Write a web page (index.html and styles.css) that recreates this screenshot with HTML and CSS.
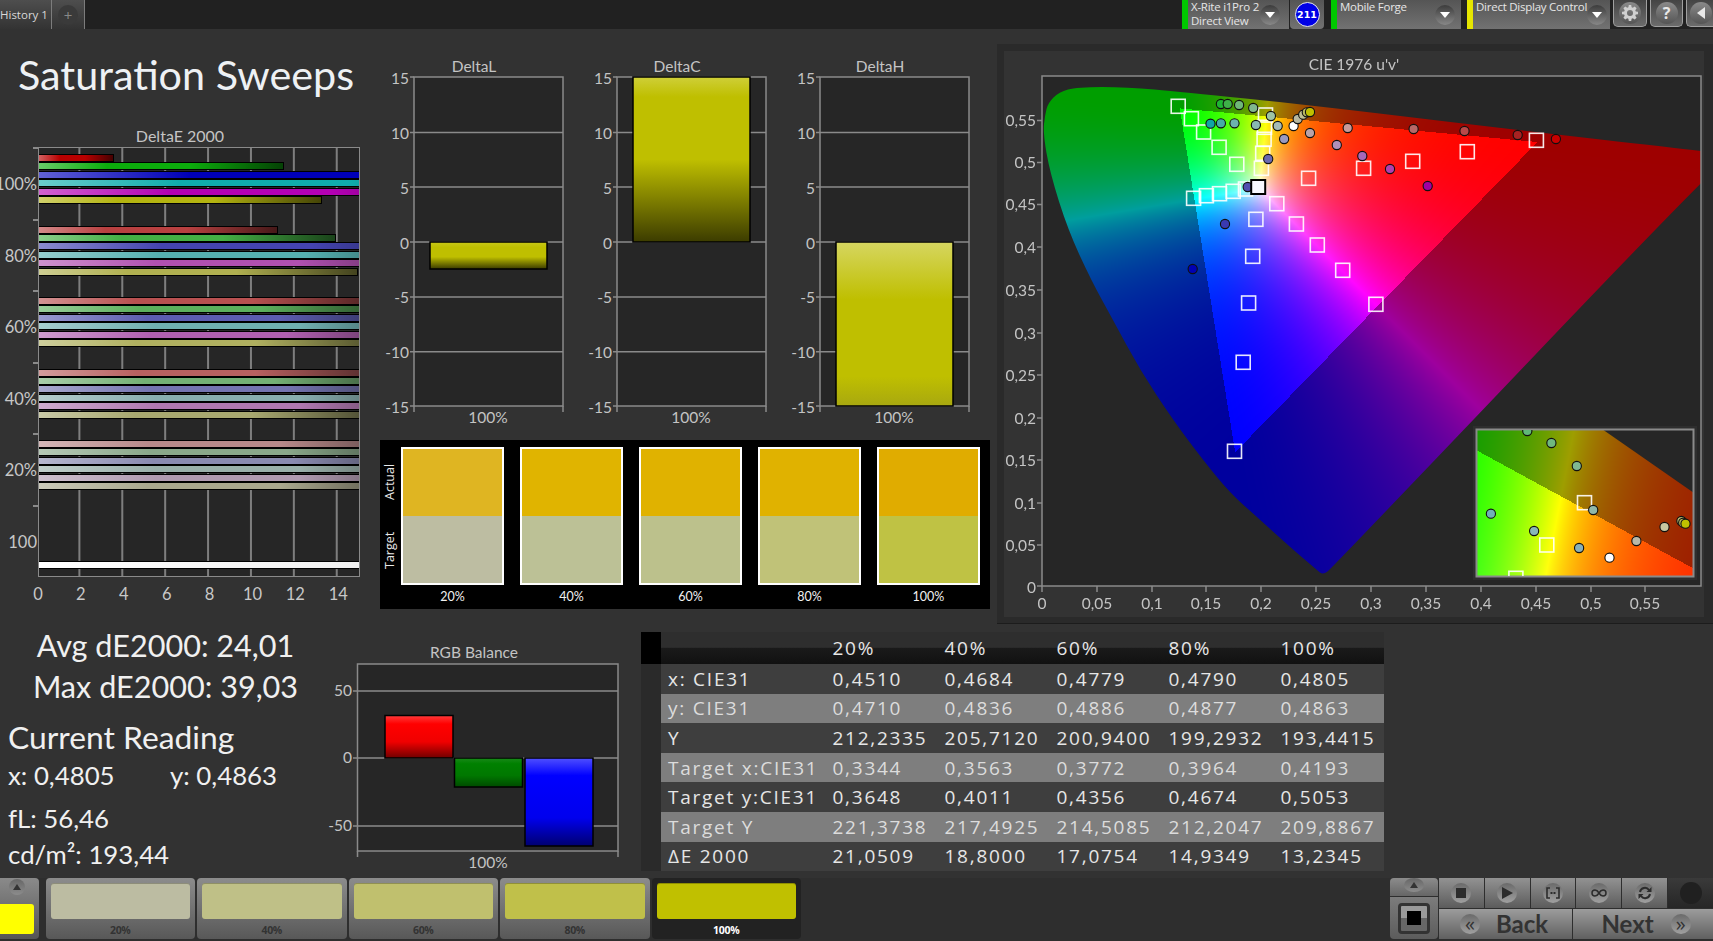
FILE: index.html
```html
<!DOCTYPE html>
<html lang="en">
<head>
<meta charset="utf-8">
<title>Saturation Sweeps</title>
<link rel="stylesheet" href="styles.css">
</head>
<body>
<div class="app">
  <header class="topbar">
    <div class="tab">History 1</div>
    <div class="tab tab-add"><span class="add-knob">+</span></div>
    <div class="top-right">
      <div class="device dev-meter green"><div class="dev-label"><span>X-Rite i1Pro 2</span><span>Direct View</span></div><span class="knob"><svg width="10" height="6" viewBox="0 0 12 7"><path d="M0 0h12L6 7z" fill="#fff"/></svg></span></div>
      <div class="badge-wrap"><span class="badge">211</span></div>
      <div class="device dev-forge green"><div class="dev-label"><span>Mobile Forge</span></div><span class="knob"><svg width="10" height="6" viewBox="0 0 12 7"><path d="M0 0h12L6 7z" fill="#fff"/></svg></span></div>
      <div class="device dev-ddc yellow"><div class="dev-label"><span>Direct Display Control</span></div><span class="knob"><svg width="10" height="6" viewBox="0 0 12 7"><path d="M0 0h12L6 7z" fill="#fff"/></svg></span></div>
      <div class="tool tool-gear"><span class="tool-knob"><svg width="16" height="16" viewBox="0 0 16 16"><path fill="#d0d0d0" fill-rule="evenodd" d="M6.8 0h2.4l.4 2.2 1.2.5L12.700 1.400l1.900 1.900-1.300 1.900.5 1.200 2.200.4v2.400l-2.200.4-.5 1.200 1.300 1.900-1.900 1.900-1.900-1.300-1.200.5-.4 2.200H6.800l-.4-2.200-1.200-.5-1.900 1.300-1.900-1.900 1.300-1.900-.5-1.200L0 9.200V6.800l2.200-.4.500-1.200-1.300-1.900 1.900-1.900 1.900 1.300 1.200-.5zM8 5a3 3 0 1 0 0 6 3 3 0 0 0 0-6z"/></svg></span></div>
      <div class="tool tool-help"><span class="tool-knob help-mark">?</span></div>
      <div class="tool tool-back"><span class="tool-knob"><svg width="8" height="12" viewBox="0 0 8 12"><path d="M8 0v12L0 6z" fill="#e8e8e8"/></svg></span></div>
    </div>
  </header>

  <main class="content">
    <div class="upper">
      <section class="col-sweep">
        <h1 class="page-title">Saturation Sweeps</h1>
        <div class="chart-de">
          <div class="chart-title de-title">DeltaE 2000</div>
          <div class="de-body">
            <div class="de-ylabels">
              <span>100%</span><span>80%</span><span>60%</span><span>40%</span><span>20%</span><span>100</span>
            </div>
            <div class="de-plot">
              <div class="de-group">
                <div class="bar r100" style="width:75px"></div><div class="bar g100" style="width:245px"></div><div class="bar b100" style="width:540px"></div><div class="bar c100" style="width:500px"></div><div class="bar m100" style="width:470px"></div><div class="bar y100" style="width:283px"></div>
              </div>
              <div class="de-group">
                <div class="bar r80" style="width:239px"></div><div class="bar g80" style="width:297px"></div><div class="bar b80" style="width:440px"></div><div class="bar c80" style="width:430px"></div><div class="bar m80" style="width:420px"></div><div class="bar y80" style="width:319px"></div>
              </div>
              <div class="de-group">
                <div class="bar r60" style="width:345px"></div><div class="bar g60" style="width:360px"></div><div class="bar b60" style="width:390px"></div><div class="bar c60" style="width:420px"></div><div class="bar m60" style="width:400px"></div><div class="bar y60" style="width:350px"></div>
              </div>
              <div class="de-group">
                <div class="bar r40" style="width:350px"></div><div class="bar g40" style="width:380px"></div><div class="bar b40" style="width:400px"></div><div class="bar c40" style="width:420px"></div><div class="bar m40" style="width:420px"></div><div class="bar y40" style="width:345px"></div>
              </div>
              <div class="de-group">
                <div class="bar r20" style="width:390px"></div><div class="bar g20" style="width:400px"></div><div class="bar b20" style="width:410px"></div><div class="bar c20" style="width:420px"></div><div class="bar m20" style="width:420px"></div><div class="bar y20" style="width:390px"></div>
              </div>
              <div class="de-group de-white">
                <div class="bar w100" style="width:321px"></div>
              </div>
            </div>
          </div>
          <div class="de-xlabels"><span>0</span><span>2</span><span>4</span><span>6</span><span>8</span><span>10</span><span>12</span><span>14</span></div>
        </div>
      </section>

      <section class="col-delta">
        <div class="delta-row">
          <svg class="delta-svg" viewBox="0 0 203 372" width="203" height="372">
            <defs>
              <linearGradient id="gradL" x1="0" y1="0" x2="0" y2="1"><stop offset="0" stop-color="#c8c818"/><stop offset=".2" stop-color="#bfbf00"/><stop offset=".55" stop-color="#bfbf00"/><stop offset="1" stop-color="#3a3a00"/></linearGradient>
              <linearGradient id="gradC" x1="0" y1="0" x2="0" y2="1"><stop offset="0" stop-color="#cfcf38"/><stop offset=".12" stop-color="#bfbf00"/><stop offset=".5" stop-color="#bfbf00"/><stop offset="1" stop-color="#3c3c00"/></linearGradient>
              <linearGradient id="gradH" x1="0" y1="0" x2="0" y2="1"><stop offset="0" stop-color="#d6d660"/><stop offset=".35" stop-color="#bfbf00"/><stop offset=".82" stop-color="#bfbf00"/><stop offset="1" stop-color="#a8a810"/></linearGradient>
            </defs>
            <text class="ct" x="94" y="14">DeltaL</text>
            <rect class="plot" x="34" y="19" width="149" height="329"/>
            <path class="grid" d="M34 74.500H183M34 129H183M34 184H183M34 239H183M34 293.800H183M30 19h4M30 74.500h4M30 129h4M30 184h4M30 239h4M30 293.800h4M30 348h4M34 348v6M183 348v6"/>
            <text class="yt" x="29" y="25.500">15</text><text class="yt" x="29" y="80.500">10</text><text class="yt" x="29" y="135.500">5</text><text class="yt" x="29" y="190.500">0</text><text class="yt" x="29" y="244.500">-5</text><text class="yt" x="29" y="299.500">-10</text><text class="yt" x="29" y="354.500">-15</text>
            <rect class="dbar" x="50" y="184" width="117" height="27" fill="url(#gradL)"/>
            <text class="ct" x="108" y="365">100%</text>
          </svg>
          <svg class="delta-svg" viewBox="0 0 203 372" width="203" height="372">
            <text class="ct" x="94" y="14">DeltaC</text>
            <rect class="plot" x="34" y="19" width="149" height="329"/>
            <path class="grid" d="M34 74.500H183M34 129H183M34 184H183M34 239H183M34 293.800H183M30 19h4M30 74.500h4M30 129h4M30 184h4M30 239h4M30 293.800h4M30 348h4M34 348v6M183 348v6"/>
            <text class="yt" x="29" y="25.500">15</text><text class="yt" x="29" y="80.500">10</text><text class="yt" x="29" y="135.500">5</text><text class="yt" x="29" y="190.500">0</text><text class="yt" x="29" y="244.500">-5</text><text class="yt" x="29" y="299.500">-10</text><text class="yt" x="29" y="354.500">-15</text>
            <rect class="dbar" x="50" y="19" width="117" height="165" fill="url(#gradC)"/>
            <text class="ct" x="108" y="365">100%</text>
          </svg>
          <svg class="delta-svg" viewBox="0 0 203 372" width="203" height="372">
            <text class="ct" x="94" y="14">DeltaH</text>
            <rect class="plot" x="34" y="19" width="149" height="329"/>
            <path class="grid" d="M34 74.500H183M34 129H183M34 184H183M34 239H183M34 293.800H183M30 19h4M30 74.500h4M30 129h4M30 184h4M30 239h4M30 293.800h4M30 348h4M34 348v6M183 348v6"/>
            <text class="yt" x="29" y="25.500">15</text><text class="yt" x="29" y="80.500">10</text><text class="yt" x="29" y="135.500">5</text><text class="yt" x="29" y="190.500">0</text><text class="yt" x="29" y="244.500">-5</text><text class="yt" x="29" y="299.500">-10</text><text class="yt" x="29" y="354.500">-15</text>
            <rect class="dbar" x="50" y="184" width="117" height="164" fill="url(#gradH)"/>
            <text class="ct" x="108" y="365">100%</text>
          </svg>
        </div>
        <div class="swatch-panel">
          <div class="swatch-axis"><span>Actual</span><span>Target</span></div>
          <div class="swatch-col"><div class="swatch"><i class="a20"></i><i class="t20"></i></div><span>20%</span></div>
          <div class="swatch-col"><div class="swatch"><i class="a40"></i><i class="t40"></i></div><span>40%</span></div>
          <div class="swatch-col"><div class="swatch"><i class="a60"></i><i class="t60"></i></div><span>60%</span></div>
          <div class="swatch-col"><div class="swatch"><i class="a80"></i><i class="t80"></i></div><span>80%</span></div>
          <div class="swatch-col"><div class="swatch"><i class="a100"></i><i class="t100"></i></div><span>100%</span></div>
        </div>
      </section>

      <section class="col-cie">
        <div class="cie-panel">
          <canvas id="cie" class="cie-canvas" width="659" height="510"></canvas>
          <svg class="cie-svg" viewBox="1004 51 700 566" width="700" height="566">
            <defs>
              <rect id="sq" x="-7" y="-7" width="14" height="14" class="square"/>
            </defs>
            <text class="ct" x="1354" y="70">CIE 1976 u'v'</text>
            <rect class="frame" x="1042" y="76" width="659" height="510"/>
            <path class="grid" d="M1037 120.500h5M1037 162.500h5M1037 204.500h5M1037 247h5M1037 290h5M1037 333h5M1037 375h5M1037 418h5M1037 460h5M1037 503h5M1037 545h5M1037 586h5M1042 586v6M1097 586v6M1152 586v6M1206 586v6M1261 586v6M1316 586v6M1371 586v6M1426 586v6M1481 586v6M1536 586v6M1591 586v6M1645 586v6"/>
            <text class="yt" x="1036" y="125.500">0,55</text><text class="yt" x="1036" y="167.500">0,5</text><text class="yt" x="1036" y="209.500">0,45</text><text class="yt" x="1036" y="252.500">0,4</text><text class="yt" x="1036" y="295.500">0,35</text><text class="yt" x="1036" y="338.500">0,3</text><text class="yt" x="1036" y="380.500">0,25</text><text class="yt" x="1036" y="423.500">0,2</text><text class="yt" x="1036" y="465.500">0,15</text><text class="yt" x="1036" y="508.500">0,1</text><text class="yt" x="1036" y="550.500">0,05</text><text class="yt" x="1036" y="592.500">0</text>
            <text class="ct" x="1042" y="609">0</text><text class="ct" x="1097" y="609">0,05</text><text class="ct" x="1152" y="609">0,1</text><text class="ct" x="1206" y="609">0,15</text><text class="ct" x="1261" y="609">0,2</text><text class="ct" x="1316" y="609">0,25</text><text class="ct" x="1371" y="609">0,3</text><text class="ct" x="1426" y="609">0,35</text><text class="ct" x="1481" y="609">0,4</text><text class="ct" x="1536" y="609">0,45</text><text class="ct" x="1591" y="609">0,5</text><text class="ct" x="1645" y="609">0,55</text>

            <use href="#sq" x="1178.200" y="106.300"/><use href="#sq" x="1191.400" y="118.700"/><use href="#sq" x="1203.600" y="132"/><use href="#sq" x="1219.100" y="147.300"/><use href="#sq" x="1236.800" y="164.300"/><use href="#sq" x="1193.600" y="198.300"/><use href="#sq" x="1206.400" y="195.700"/><use href="#sq" x="1219.500" y="193.700"/><use href="#sq" x="1233.200" y="191.300"/><use href="#sq" x="1245.500" y="189"/><use href="#sq" x="1276.800" y="203.700"/><use href="#sq" x="1296.400" y="224"/><use href="#sq" x="1317.300" y="245"/><use href="#sq" x="1342.700" y="270.300"/><use href="#sq" x="1375.900" y="304.300"/><use href="#sq" x="1261.400" y="168.300"/><use href="#sq" x="1262.700" y="153.300"/><use href="#sq" x="1264.100" y="139.300"/><use href="#sq" x="1264.500" y="127.300"/><use href="#sq" x="1265.500" y="115"/><use href="#sq" x="1308.600" y="178.300"/><use href="#sq" x="1363.600" y="168.300"/><use href="#sq" x="1412.700" y="161.300"/><use href="#sq" x="1467.300" y="151.700"/><use href="#sq" x="1536.400" y="140.300"/><use href="#sq" x="1255.900" y="219.300"/><use href="#sq" x="1252.700" y="256.300"/><use href="#sq" x="1248.600" y="303"/><use href="#sq" x="1243.200" y="362.300"/><use href="#sq" x="1234.500" y="451.300"/>

            <g class="dots">
              <circle cx="1220.900" cy="104" r="4.600" fill="#1fb532"/><circle cx="1227.700" cy="104" r="4.600" fill="#3eb048"/><circle cx="1239.100" cy="105" r="4.600" fill="#6fb878"/><circle cx="1253.200" cy="108" r="4.600" fill="#80b88c"/><circle cx="1270.900" cy="116" r="4.600" fill="#9ec4a4"/>
              <circle cx="1210.500" cy="123.700" r="4.600" fill="#10a5a5"/><circle cx="1220.900" cy="123.300" r="4.600" fill="#45aca8"/><circle cx="1234.500" cy="123.300" r="4.600" fill="#6cb3ae"/><circle cx="1255.900" cy="125" r="4.600" fill="#88b8b4"/><circle cx="1277.700" cy="126" r="4.600" fill="#a5bcb6"/><circle cx="1293.600" cy="126" r="4.600" fill="#ffffff"/>
              <circle cx="1310" cy="133" r="4.600" fill="#b9a3a8"/><circle cx="1347.700" cy="128" r="4.600" fill="#c89a9a"/><circle cx="1413.600" cy="129" r="4.600" fill="#b86868"/><circle cx="1464.500" cy="131" r="4.600" fill="#b84848"/><circle cx="1517.700" cy="135" r="4.600" fill="#a82222"/><circle cx="1555.900" cy="139" r="4.600" fill="#c80000"/>
              <circle cx="1336.800" cy="145" r="4.600" fill="#b090b8"/><circle cx="1362.300" cy="156" r="4.600" fill="#a868b8"/><circle cx="1390" cy="169" r="4.600" fill="#b040b0"/><circle cx="1427.700" cy="186" r="4.600" fill="#a000a0"/>
              <circle cx="1284.100" cy="139" r="4.600" fill="#9a9ac0"/><circle cx="1268.200" cy="159" r="4.600" fill="#6a6ab0"/><circle cx="1247.700" cy="187" r="4.600" fill="#5050b0"/><circle cx="1225" cy="224" r="4.600" fill="#3a3ab0"/><circle cx="1192.700" cy="269" r="4.600" fill="#0000b4"/>
              <circle cx="1297.700" cy="119" r="4.600" fill="#b8b8a0"/><circle cx="1303.200" cy="114.700" r="4.600" fill="#c0c090"/><circle cx="1306.800" cy="112.300" r="4.600" fill="#b8b860"/><circle cx="1310" cy="112" r="4.600" fill="#c0c000"/>
            </g>
            <rect class="square square-white" x="1251.200" y="180" width="14" height="14"/>

            <rect class="inset-mat" x="1474.500" y="427.500" width="221" height="151"/>
            <rect class="inset-frame" x="1476.500" y="429.500" width="217" height="147"/>
            <svg x="1477" y="430" width="216" height="146" viewBox="1477 430 216 146">
              <use href="#sq" x="1584.500" y="502.700"/><use href="#sq" x="1546.800" y="545"/><use href="#sq" x="1515.900" y="578.300"/>
              <g class="dots">
                <circle cx="1527.300" cy="431" r="4.600" fill="#60b878"/><circle cx="1551.400" cy="443" r="4.600" fill="#70b880"/><circle cx="1576.800" cy="466" r="4.600" fill="#80b890"/><circle cx="1593.200" cy="510" r="4.600" fill="#90b8a8"/><circle cx="1490.900" cy="513.700" r="4.600" fill="#70b0b8"/><circle cx="1534.100" cy="531" r="4.600" fill="#88b8b8"/><circle cx="1579.100" cy="548" r="4.600" fill="#88b0b8"/><circle cx="1609.500" cy="557.700" r="4.600" fill="#ffffff"/><circle cx="1636.400" cy="541" r="4.600" fill="#b8b8a8"/><circle cx="1664.500" cy="527" r="4.600" fill="#c8c8a0"/><circle cx="1681.400" cy="521" r="4.600" fill="#b8b870"/><circle cx="1683.200" cy="522.700" r="4.600" fill="#b8b860"/><circle cx="1685.500" cy="523.700" r="4.600" fill="#c0c000"/>
              </g>
            </svg>
          </svg>
        </div>
      </section>
    </div>

    <div class="lower">
      <section class="stats">
        <div class="stat-big">Avg dE2000: 24,01</div>
        <div class="stat-big">Max dE2000: 39,03</div>
        <div class="stat-head">Current Reading</div>
        <div class="stat-line stat-xy"><span class="stat-x">x: 0,4805</span><span>y: 0,4863</span></div>
        <div class="stat-line stat-fl">fL: 56,46</div>
        <div class="stat-line">cd/m²: 193,44</div>
      </section>

      <svg class="rgb-svg" viewBox="325 640 316 230" width="316" height="230">
        <defs>
          <linearGradient id="gradR" x1="0" y1="0" x2="0" y2="1"><stop offset="0" stop-color="#ff3c3c"/><stop offset=".2" stop-color="#ff0000"/><stop offset=".62" stop-color="#f00000"/><stop offset="1" stop-color="#700000"/></linearGradient>
          <linearGradient id="gradG" x1="0" y1="0" x2="0" y2="1"><stop offset="0" stop-color="#1a8a1a"/><stop offset=".2" stop-color="#008000"/><stop offset=".6" stop-color="#007800"/><stop offset="1" stop-color="#004a00"/></linearGradient>
          <linearGradient id="gradB" x1="0" y1="0" x2="0" y2="1"><stop offset="0" stop-color="#5050ff"/><stop offset=".2" stop-color="#0000ff"/><stop offset=".68" stop-color="#0000ee"/><stop offset="1" stop-color="#000070"/></linearGradient>
        </defs>
        <text class="ct" x="474" y="658">RGB Balance</text>
        <rect class="plot" x="357.500" y="664" width="260.500" height="187"/>
        <path class="grid" d="M357.500 691H618M357.500 758H618M357.500 826H618M353 691h4.500M353 758h4.500M353 826h4.500M357.500 851v6M618 851v6"/>
        <text class="yt" x="352" y="696">50</text><text class="yt" x="352" y="763">0</text><text class="yt" x="352" y="831">-50</text>
        <rect class="dbar" x="385" y="715.500" width="68" height="42.500" fill="url(#gradR)"/>
        <rect class="dbar" x="454.500" y="758" width="68" height="29" fill="url(#gradG)"/>
        <rect class="dbar" x="525" y="758" width="68" height="88" fill="url(#gradB)"/>
        <text class="ct" x="488" y="868">100%</text>
      </svg>

      <table class="data">
        <colgroup><col class="c-side"><col class="c-label"><col class="c-num"><col class="c-num"><col class="c-num"><col class="c-num"><col class="c-last"></colgroup>
        <thead>
          <tr><th class="side-head"></th><th></th><th>20%</th><th>40%</th><th>60%</th><th>80%</th><th>100%</th></tr>
        </thead>
        <tbody>
          <tr><td class="side"></td><td class="lbl">x: CIE31</td><td>0,4510</td><td>0,4684</td><td>0,4779</td><td>0,4790</td><td>0,4805</td></tr>
          <tr class="alt"><td class="side"></td><td class="lbl">y: CIE31</td><td>0,4710</td><td>0,4836</td><td>0,4886</td><td>0,4877</td><td>0,4863</td></tr>
          <tr><td class="side"></td><td class="lbl">Y</td><td>212,2335</td><td>205,7120</td><td>200,9400</td><td>199,2932</td><td>193,4415</td></tr>
          <tr class="alt"><td class="side"></td><td class="lbl">Target x:CIE31</td><td>0,3344</td><td>0,3563</td><td>0,3772</td><td>0,3964</td><td>0,4193</td></tr>
          <tr><td class="side"></td><td class="lbl">Target y:CIE31</td><td>0,3648</td><td>0,4011</td><td>0,4356</td><td>0,4674</td><td>0,5053</td></tr>
          <tr class="alt"><td class="side"></td><td class="lbl">Target Y</td><td>221,3738</td><td>217,4925</td><td>214,5085</td><td>212,2047</td><td>209,8867</td></tr>
          <tr><td class="side"></td><td class="lbl">ΔE 2000</td><td>21,0509</td><td>18,8000</td><td>17,0754</td><td>14,9349</td><td>13,2345</td></tr>
        </tbody>
      </table>
    </div>
  </main>

  <footer class="bottombar">
    <div class="handle">
      <span class="mini-knob"><svg width="8" height="6" viewBox="0 0 8 6"><path d="M4 0l4 6H0z" fill="#333"/></svg></span>
      <span class="current-color"></span>
    </div>
    <div class="tiles">
      <div class="tile"><span class="tile-color s20"></span><span class="tile-label">20%</span></div>
      <div class="tile"><span class="tile-color s40"></span><span class="tile-label">40%</span></div>
      <div class="tile"><span class="tile-color s60"></span><span class="tile-label">60%</span></div>
      <div class="tile"><span class="tile-color s80"></span><span class="tile-label">80%</span></div>
      <div class="tile tile-active"><span class="tile-color s100"></span><span class="tile-label">100%</span></div>
    </div>
    <div class="controls">
      <div class="ctl-side">
        <div class="ctl-up"><span class="mini-knob"><svg width="8" height="6" viewBox="0 0 8 6"><path d="M4 0l4 6H0z" fill="#333"/></svg></span></div>
        <div class="ctl-stop"><span class="stop-frame"><span class="stop-square"></span></span></div>
      </div>
      <div class="ctl-main">
        <div class="ctl-row">
          <div class="ctl-btn"><span class="ctl-knob"><svg width="10" height="10" viewBox="0 0 10 10"><rect width="10" height="10" fill="#2c2c2c"/></svg></span></div>
          <div class="ctl-btn"><span class="ctl-knob"><svg width="12" height="12" viewBox="0 0 12 12"><path d="M1 0l11 6-11 6z" fill="#2c2c2c"/></svg></span></div>
          <div class="ctl-btn"><span class="ctl-knob"><svg width="14" height="12" viewBox="0 0 14 12"><path d="M4 1H1v10h3M10 1h3v10h-3" fill="none" stroke="#2c2c2c" stroke-width="1.600"/><rect x="4.500" y="5" width="2" height="2" fill="#2c2c2c"/><rect x="7.500" y="5" width="2" height="2" fill="#2c2c2c"/></svg></span></div>
          <div class="ctl-btn"><span class="ctl-knob"><svg width="16" height="8" viewBox="0 0 16 8"><path d="M8 4C6.500 1.500 5.500 1 4 1a3 3 0 0 0 0 6c1.500 0 2.500-.5 4-3s2.500-3 4-3a3 3 0 0 1 0 6c-1.500 0-2.500-.5-4-3z" fill="none" stroke="#2c2c2c" stroke-width="1.500"/></svg></span></div>
          <div class="ctl-btn"><span class="ctl-knob"><svg width="14" height="14" viewBox="0 0 14 14"><path d="M2 6a5 5 0 0 1 9-2" fill="none" stroke="#2c2c2c" stroke-width="2"/><path d="M12 8a5 5 0 0 1-9 2" fill="none" stroke="#2c2c2c" stroke-width="2"/><path d="M13.500 1v5h-5zM.500 13V8h5z" fill="#2c2c2c"/></svg></span></div>
          <div class="ctl-btn ctl-dark"><span class="dark-knob"></span></div>
        </div>
        <div class="ctl-row">
          <div class="nav-btn"><span class="ctl-knob nav-glyph">«</span><span class="nav-text">Back</span></div>
          <div class="nav-btn nav-next"><span class="nav-text">Next</span><span class="ctl-knob nav-glyph">»</span></div>
        </div>
      </div>
    </div>
  </footer>
</div>
<script src="script.js"></script>
</body>
</html>
```
FILE: styles.css
```css
* { box-sizing: border-box; }
html, body { margin: 0; padding: 0; background: #323232; }
body { font-family: Lato, "Open Sans", sans-serif; color: #c8c8c8; }
.app { width: 1713px; height: 941px; display: flex; flex-direction: column; overflow: hidden; background: #323232; }

/* top bar */
.topbar { height: 29px; flex: none; display: flex; background: #212121; }
.tab { width: 52px; height: 29px; background: linear-gradient(#4e4e4e, #333); border-right: 1px solid #7c7c7c; font: 11.500px/30px "Open Sans", sans-serif; color: #d8d8d8; white-space: nowrap; overflow: hidden; }
.tab-add { width: 33px; display: flex; align-items: center; justify-content: center; }
.add-knob { width: 20px; height: 20px; border-radius: 50%; background: #3a3a3a; color: #888; font: 15px/20px "Open Sans", sans-serif; text-align: center; }
.top-right { margin-left: auto; display: flex; }
.device { height: 29px; display: flex; align-items: center; padding-left: 3px; padding-right: 6px; background: linear-gradient(#555, #727272); border-left: 6px solid #00c800; color: #e6e6e6; }
.device.yellow { border-left-color: #e6e600; }
.dev-meter { width: 107px; margin-right: 1px; padding-right: 9px; }
.dev-forge { width: 130px; margin-left: 7px; }
.dev-ddc { width: 143px; margin-left: 6px; margin-right: 3px; }
.dev-label { display: flex; flex-direction: column; font: 11.500px/14px "Open Sans", sans-serif; align-self: flex-start; white-space: nowrap; letter-spacing: -.25px; }
.knob { margin-left: auto; width: 20px; height: 20px; border-radius: 50%; background: linear-gradient(#3c3c3c, #888); display: flex; align-items: center; justify-content: center; flex: none; }
.badge-wrap { width: 34px; height: 29px; background: linear-gradient(#555, #727272); border-radius: 0 0 4px 4px; display: flex; align-items: center; justify-content: center; }
.badge { width: 25px; height: 25px; border-radius: 50%; background: #0000e6; border: 1px solid #e8e8e8; color: #fff; font: 700 9.500px/23px "DejaVu Sans", sans-serif; text-align: center; }
.tool { height: 27px; border: 1px solid #a0a0a0; border-top: 0; border-radius: 0 0 5px 5px; background: linear-gradient(#444, #6c6c6c); display: flex; align-items: center; justify-content: center; margin-right: 3px; }
.tool-gear { width: 34px; }
.tool-help { width: 33px; }
.tool-back { width: 27px; margin-right: 0; justify-content: flex-start; padding-left: 3px; border-radius: 0 0 0 5px; border-right: 0; }
.tool-knob { width: 22px; height: 22px; border-radius: 50%; background: linear-gradient(#8a8a8a, #555); display: flex; align-items: center; justify-content: center; flex: none; }
.help-mark { color: #e8e8e8; font: 700 16px "Open Sans", sans-serif; }

/* layout */
.content { flex: 1; display: flex; flex-direction: column; min-height: 0; }
.upper { height: 595px; flex: none; display: flex; }
.lower { flex: 1; display: flex; align-items: flex-start; }
.col-sweep { width: 370px; flex: none; }
.col-delta { width: 627px; flex: none; padding: 29px 0 0 10px; }
.col-cie { width: 716px; flex: none; margin-top: 15px; height: 580px; padding: 7px 9px 6px 7px; background: #2a2a2a; border-bottom: 1px solid #1c1c1c; }

/* title and DeltaE */
.page-title { margin: 0; padding: 22px 0 0 18px; height: 96px; font: 400 41.300px/46px Lato, sans-serif; color: #eef1f4; white-space: nowrap; }
.chart-de { width: 370px; }
.chart-title { color: #c4c4c4; font-size: 16px; line-height: 22px; text-align: center; }
.de-title { width: 360px; height: 22px; }
.de-body { display: flex; }
.de-ylabels { width: 38px; flex: none; display: flex; flex-direction: column; }
.de-ylabels span { height: 71.500px; display: flex; align-items: center; justify-content: flex-end; padding: 3px 1px 0 0; font-size: 16.500px; color: #c8c8c8; background: linear-gradient(#8a8a8a, #8a8a8a) right top / 5px 2px no-repeat; }
.de-plot { width: 322px; height: 430px; flex: none; overflow: hidden; border: 1.500px solid #8a8a8a; background-color: #262626; background-image: linear-gradient(90deg, transparent 41px, #7e7e7e 41px, #7e7e7e 43px); background-size: 42.900px 100%; background-position: -1.500px 0; }
.de-group { height: 71.500px; padding-top: 6px; }
.de-white { padding-top: 55.500px; }
.bar { height: 8px; margin-bottom: .450px; border: 1px solid #000; border-left: 0; --shade: linear-gradient(90deg, rgba(255,255,255,.38), rgba(255,255,255,0) 28%, rgba(0,0,0,0) 62%, rgba(0,0,0,.62)); background: var(--shade), var(--c); }
.r100 { --c: #b80000; } .g100 { --c: #0cac0c; } .b100 { --c: #0000b8; } .c100 { --c: #10acac; } .m100 { --c: #b400b4; } .y100 { --c: #b4b410; }
.r80 { --c: #b84040; } .g80 { --c: #44b044; } .b80 { --c: #4444b0; } .c80 { --c: #55b0b0; } .m80 { --c: #b050b0; } .y80 { --c: #b0b050; }
.r60 { --c: #b85050; } .g60 { --c: #5cb05c; } .b60 { --c: #5c5cb0; } .c60 { --c: #70b0b0; } .m60 { --c: #b060b0; } .y60 { --c: #b0b060; }
.r40 { --c: #b86060; } .g40 { --c: #74b074; } .b40 { --c: #7474b0; } .c40 { --c: #88aeae; } .m40 { --c: #b078b0; } .y40 { --c: #a8a870; }
.r20 { --c: #b88a8a; } .g20 { --c: #8aa88a; } .b20 { --c: #8a8ab0; } .c20 { --c: #9ab0aa; } .m20 { --c: #b09ab0; } .y20 { --c: #aaa88e; }
.w100 { background: linear-gradient(90deg, #fff, #f0f0f0); }
.de-xlabels { display: flex; padding-left: 38px; padding-top: 7px; font-size: 16.500px; color: #c8c8c8; }
.de-xlabels span { width: 42.900px; flex: none; margin-left: 0; transform: translateX(-21.450px); text-align: center; }

/* svg charts */
.ct { font: 15.500px Lato, sans-serif; fill: #c4c4c4; text-anchor: middle; }
.yt { font: 15.500px Lato, sans-serif; fill: #c4c4c4; text-anchor: end; }
.plot { fill: #262626; stroke: #8a8a8a; stroke-width: 1.500; }
.grid { stroke: #8a8a8a; stroke-width: 1.500; fill: none; }
.frame { fill: none; stroke: #8a8a8a; stroke-width: 1.500; }
.dbar { stroke: #000; stroke-width: 1.500; }
.delta-row { display: flex; height: 372px; }
.delta-svg { display: block; flex: none; }

/* swatches */
.swatch-panel { width: 610px; height: 169px; margin-top: 10px; background: #000; display: flex; gap: 16px; padding-top: 7px; position: relative; }
.swatch-axis { width: 5px; margin-right: 0; flex: none; height: 138px; display: flex; flex-direction: column; }
.swatch-axis span { display: block; width: 20px; height: 69px; writing-mode: vertical-rl; transform: rotate(180deg); font: 12.500px/20px "Open Sans", sans-serif; color: #e8e8e8; text-align: center; }
.swatch-col { width: 103px; flex: none; font: 12.500px/24px Lato, sans-serif; color: #f0f0f0; text-align: center; }
.swatch { height: 138px; border: 2px solid #fff; display: flex; flex-direction: column; }
.swatch i { display: block; flex: 1; }
.swatch-col span { display: block; }
.a20 { background: #dfb522; } .a40 { background: #e0b400; } .a60 { background: #e0b200; } .a80 { background: #e0b200; } .a100 { background: #e0ac00; }
.t20 { background: #bdbda2; } .t40 { background: #bcc196; } .t60 { background: #bcc18c; } .t80 { background: #c0c278; } .t100 { background: #bfc244; }

/* CIE */
.cie-panel { width: 700px; height: 566px; background: #333; position: relative; }
.cie-canvas { position: absolute; left: 38px; top: 25px; width: 659px; height: 510px; display: block; }
.cie-svg { position: absolute; left: 0; top: 0; display: block; }
.square { fill: none; stroke: #fff; stroke-opacity: .9; stroke-width: 1.600; }
.square-white { fill: #f8f8ff; stroke: #000; stroke-opacity: 1; stroke-width: 2; }
.dots circle { stroke: #101010; stroke-width: 1.100; }
.inset-mat { fill: none; stroke: #2e2e2e; stroke-width: 3; }
.inset-frame { fill: none; stroke: #8a8a8a; stroke-width: 2; }

/* stats */
.stats { width: 325px; flex: none; color: #f0f0f0; padding-top: 1px; }
.stat-big { font-size: 30.600px; line-height: 41px; text-align: center; width: 331px; white-space: nowrap; }
.stat-head { font-size: 31.800px; line-height: 42px; padding-left: 8px; margin-top: 9px; margin-bottom: -1px; white-space: nowrap; }
.stat-line { font-size: 25.800px; line-height: 36px; padding-left: 8px; white-space: nowrap; }
.stat-xy { display: flex; }
.stat-x { width: 162px; }
.stat-fl { margin-top: 7px; }
.rgb-svg { display: block; flex: none; margin-top: 16px; }

/* table */
.data { margin-top: 8px; width: 743px; border-collapse: collapse; table-layout: fixed; font: 19px "Open Sans", sans-serif; letter-spacing: 1.750px; color: #e6e6e6; flex: none; }
.c-side { width: 20px; } .c-label { width: 171.500px; } .c-num { width: 112px; } .c-last { width: 103.500px; }
.data th { height: 32px; padding: 0; font-weight: 400; text-align: left; background: linear-gradient(#2e2e2e 0, #2e2e2e 48%, #1a1a1a 50%, #111 100%); }
.data th.side-head { background: #000; }
.data td { height: 29.600px; padding: 0; background: #3e3e3e; white-space: nowrap; }
.data tr.alt td { background: #7e7e7e; color: #dcdcdc; }
.data td.lbl { padding-left: 7px; }
.data td.side, .data tr.alt td.side { background: #2a2a2a; }

/* bottom bar */
.bottombar { height: 63px; flex: none; display: flex; background: #2e2e2e; padding-bottom: 2px; }
.handle { width: 39px; flex: none; background: linear-gradient(#8a8a8a, #555); border-radius: 0 4px 4px 0; display: flex; flex-direction: column; }
.mini-knob { width: 16px; height: 16px; border-radius: 50%; background: linear-gradient(#666, #8c8c8c); display: flex; align-items: center; justify-content: center; }
.handle .mini-knob { margin: 1px 0 0 9px; }
.current-color { width: 34px; height: 30px; margin-top: 9px; background: #ffff00; border-radius: 0 3px 3px 0; }
.tiles { margin-left: 6.500px; display: flex; gap: 2px; }
.tile { width: 149.500px; flex: none; background: linear-gradient(#8c8c8c, #585858); border-radius: 4px; padding: 5px 5px 0; display: flex; flex-direction: column; align-items: center; }
.tile-color { width: 100%; height: 36px; border-radius: 3px; flex: none; box-shadow: inset 0 1px 0 rgba(0,0,0,.25); }
.tile-label { font: 700 10.500px/22px "Open Sans", sans-serif; color: #333; letter-spacing: -.3px; }
.tile-active { background: #222; }
.tile-active .tile-label { color: #fff; }
.s20 { background: #bcbca2; } .s40 { background: #bfc087; } .s60 { background: #c0c06e; } .s80 { background: #c0c04a; } .s100 { background: #c0c000; }
.controls { margin-left: auto; width: 323px; display: flex; flex: none; gap: 1px; }
.ctl-side { width: 48px; flex: none; display: flex; flex-direction: column; gap: 1px; }
.ctl-up { height: 18px; background: linear-gradient(#8c8c8c, #666); border-radius: 4px 4px 0 0; display: flex; justify-content: center; }
.ctl-up .mini-knob { height: 14px; width: 20px; }
.ctl-stop { flex: 1; background: linear-gradient(#7c7c7c, #5c5c5c); border-radius: 0 0 4px 4px; display: flex; align-items: center; justify-content: center; }
.stop-frame { width: 32px; height: 31px; border: 3px solid #333; border-radius: 4px; background: linear-gradient(#9a9a9a 50%, #666 50%); display: flex; align-items: center; justify-content: center; }
.stop-square { width: 14px; height: 14px; background: #000; }
.ctl-main { flex: 1; display: flex; flex-direction: column; gap: 1px; }
.ctl-row { flex: 1; display: flex; gap: 1px; }
.ctl-btn { width: 44px; flex: 1; background: linear-gradient(#929292, #5c5c5c); display: flex; align-items: center; justify-content: center; }
.ctl-dark { background: linear-gradient(#3a3a3a, #262626); }
.dark-knob { width: 22px; height: 22px; border-radius: 50%; background: #202020; }
.ctl-knob { width: 20px; height: 20px; border-radius: 50%; background: linear-gradient(#6a6a6a, #a0a0a0); display: flex; align-items: center; justify-content: center; flex: none; }
.nav-btn { flex: 1; background: linear-gradient(#9c9c9c, #606060); display: flex; align-items: center; padding-left: 21px; gap: 16px; }
.nav-next { padding-left: 29px; gap: 17px; }
.nav-text { font: 700 24px/30px Lato, sans-serif; color: #333; }
.nav-glyph { color: #333; font: 20px/18px "Open Sans", sans-serif; }
```
FILE: script.js
```js
(function () {
  var canvas = document.getElementById('cie');
  var W = canvas.width, H = canvas.height;
  var OX = 1042, OY = 76;
  var ctx = canvas.getContext('2d');
  var SAT = 1.5;

  // chromaticity colour at a page position of the main plot; writes into out
  function colorAt(pageX, pageY, out, i) {
    var u = (pageX - 1042) / 1098, v = (586 - pageY) / 850;
    if (v < 0.001) v = 0.001;
    var d = 6 * u - 16 * v + 12;
    var x = 9 * u / d, y = 4 * v / d;
    var X = x / y, Z = (1 - x - y) / y;
    var r = 3.2406 * X - 1.5372 - 0.4986 * Z;
    var g = -0.9689 * X + 1.8758 + 0.0415 * Z;
    var b = 0.0557 * X - 0.2040 + 1.0570 * Z;
    var inside = r >= 0 && g >= 0 && b >= 0;
    r = Math.max(r, 0); g = Math.max(g, 0); b = Math.max(b, 0);
    var m = Math.max(r, g, b) || 1;
    var k = inside ? 255 : 158;
    out[i] = Math.pow(r / m, SAT) * k;
    out[i + 1] = Math.pow(g / m, SAT) * k;
    out[i + 2] = Math.pow(b / m, SAT) * k;
    out[i + 3] = 255;
  }

  var off = document.createElement('canvas');
  off.width = W; off.height = H;
  var octx = off.getContext('2d');
  var img = octx.createImageData(W, H);
  for (var py = 0; py < H; py++) {
    for (var px = 0; px < W; px++) {
      colorAt(px + OX, py + OY, img.data, (py * W + px) * 4);
    }
  }
  octx.putImageData(img, 0, 0);

  var outline = [
    [1077,87],[1127,87],[1182,92],[1309,105],[1500,128],[1701,151],[1740,155],
    [1740,140],[1332,568],[1323,575],[1317,570],[1290,547],[1257,517],[1230,493],
    [1203,460],[1173,420],[1140,370],[1113,320],[1091,280],[1068,230],[1050,173],
    [1043,133],[1045,115],[1048,103],[1059,92]
  ];

  function tracePath(c) {
    c.beginPath();
    var n = outline.length;
    c.moveTo((outline[n - 1][0] + outline[0][0]) / 2 - OX, (outline[n - 1][1] + outline[0][1]) / 2 - OY);
    for (var i = 0; i < n; i++) {
      var p = outline[i], q = outline[(i + 1) % n];
      c.quadraticCurveTo(p[0] - OX, p[1] - OY, (p[0] + q[0]) / 2 - OX, (p[1] + q[1]) / 2 - OY);
    }
    c.closePath();
  }

  ctx.fillStyle = '#262626';
  ctx.fillRect(0, 0, W, H);
  ctx.save();
  tracePath(ctx);
  ctx.clip();
  ctx.drawImage(off, 0, 0);
  ctx.restore();

  // magnified inset, computed per pixel through an affine map back to the plot
  var IX = 1476, IY = 429, IW = 218, IH = 148;
  var inset = ctx.createImageData(IW, IH);
  for (var iy = 0; iy < IH; iy++) {
    for (var ix = 0; ix < IW; ix++) {
      var dx = ix, dy = iy + IY - 445;
      var mx = 1210 + 0.6 * dx + 0.1 * dy;
      var my = 110 - 0.031 * dx + 0.17 * dy;
      colorAt(mx, my, inset.data, (iy * IW + ix) * 4);
    }
  }
  ctx.putImageData(inset, IX - OX, IY - OY);
  ctx.fillStyle = '#262626';
  ctx.beginPath();
  ctx.moveTo(1602 - OX, 429 - OY);
  ctx.lineTo(1694 - OX, 493 - OY);
  ctx.lineTo(1694 - OX, 429 - OY);
  ctx.closePath();
  ctx.fill();
})();
```
